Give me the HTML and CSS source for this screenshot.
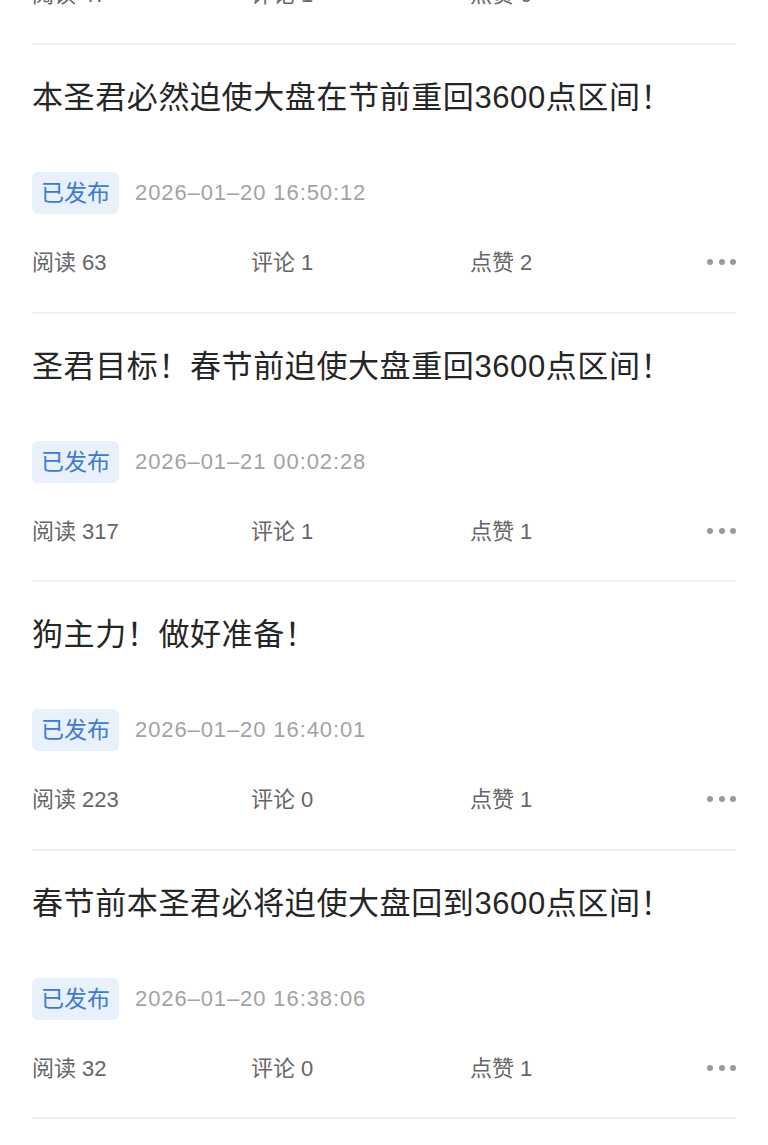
FILE: index.html
```html
<!DOCTYPE html>
<html lang="zh-CN">
<head>
    <meta charset="UTF-8">
    <meta name="viewport" content="width=device-width, initial-scale=1.0">
    <title>我的文章</title>
    <link rel="stylesheet" href="styles.css">
</head>
<body>

    <!-- Article list (scrolled, previous item cut off at top) -->
    <div class="post-list">

        <div class="post post-clipped">
            <div class="post-stats">
                <span>阅读 47</span>
                <span>评论 1</span>
                <span>点赞 0</span>
                <button class="more-btn"><i></i><i></i><i></i></button>
            </div>
        </div>

        <div class="post">
            <h2 class="post-title">本圣君必然迫使大盘在节前重回3600点区间！</h2>
            <div class="post-meta">
                <span class="status-tag">已发布</span>
                <span class="post-time">2026–01–20 16:50:12</span>
            </div>
            <div class="post-stats">
                <span>阅读 63</span>
                <span>评论 1</span>
                <span>点赞 2</span>
                <button class="more-btn"><i></i><i></i><i></i></button>
            </div>
        </div>

        <div class="post">
            <h2 class="post-title">圣君目标！春节前迫使大盘重回3600点区间！</h2>
            <div class="post-meta">
                <span class="status-tag">已发布</span>
                <span class="post-time">2026–01–21 00:02:28</span>
            </div>
            <div class="post-stats">
                <span>阅读 317</span>
                <span>评论 1</span>
                <span>点赞 1</span>
                <button class="more-btn"><i></i><i></i><i></i></button>
            </div>
        </div>

        <div class="post">
            <h2 class="post-title">狗主力！做好准备！</h2>
            <div class="post-meta">
                <span class="status-tag">已发布</span>
                <span class="post-time">2026–01–20 16:40:01</span>
            </div>
            <div class="post-stats">
                <span>阅读 223</span>
                <span>评论 0</span>
                <span>点赞 1</span>
                <button class="more-btn"><i></i><i></i><i></i></button>
            </div>
        </div>

        <div class="post">
            <h2 class="post-title">春节前本圣君必将迫使大盘回到3600点区间！</h2>
            <div class="post-meta">
                <span class="status-tag">已发布</span>
                <span class="post-time">2026–01–20 16:38:06</span>
            </div>
            <div class="post-stats">
                <span>阅读 32</span>
                <span>评论 0</span>
                <span>点赞 1</span>
                <button class="more-btn"><i></i><i></i><i></i></button>
            </div>
        </div>

    </div>

</body>
</html>
```

FILE: styles.css
```css
body {
    font-family: "Liberation Sans", "Noto Sans CJK SC", sans-serif;
    background: #fff;
    color: #262626;
    margin: 0;
    padding: 0;
}

/* List */
.post-list {
    padding: 0 32px;
    margin-top: -24.5px;
}

.post {
    padding: 30px 0 37.5px;
    border-bottom: 2px solid #efefef;
}

.post-clipped {
    padding-top: 0;
}

.post-title {
    font-size: 31px;
    font-weight: normal;
    line-height: 40px;
    letter-spacing: 0.6px;
    margin: 0;
    padding: 3px 0 1px;
    color: #262626;
}

/* Status + time */
.post-meta {
    display: flex;
    align-items: center;
    margin-top: 53px;
    height: 42px;
}

.status-tag {
    background: #e7f0fb;
    color: #3d7bd0;
    font-size: 23px;
    line-height: 42px;
    padding: 0 9px;
    border-radius: 6px;
}

.post-time {
    color: #a3a3a3;
    font-size: 22px;
    margin-left: 16px;
    letter-spacing: 0.9px;
}

/* Stats row */
.post-stats {
    display: grid;
    grid-template-columns: 219px 219px 1fr auto;
    align-items: center;
    margin-top: 30px;
    height: 30px;
    font-size: 22px;
    color: #666;
}

.post-stats span {
    padding-bottom: 5px;
}

.post-clipped .post-stats {
    margin-top: 0;
}

.more-btn {
    display: flex;
    gap: 5.5px;
    background: none;
    border: none;
    padding: 0;
    margin-top: -1px;
    cursor: pointer;
}

.more-btn i {
    width: 6px;
    height: 6px;
    border-radius: 50%;
    background: #9a9a9a;
}
```
